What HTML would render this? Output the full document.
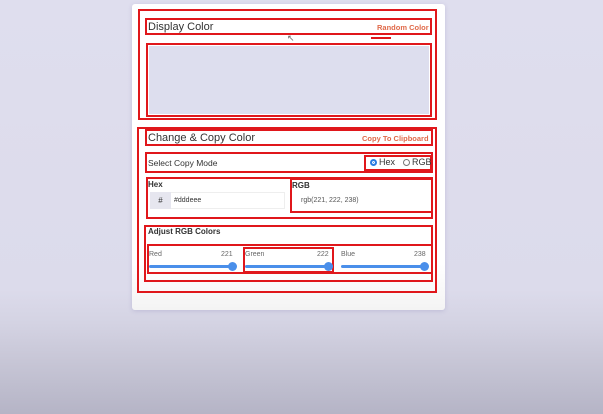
<!DOCTYPE html>
<html><head><style>
*{margin:0;padding:0;box-sizing:border-box}
body{width:603px;height:414px;overflow:hidden;background:linear-gradient(#dfdeee 0%,#dcdbeb 70%,#d4d3e3 78%,#c6c5d5 88%,#b5b4c6 100%);font-family:"Liberation Sans",sans-serif;position:relative;color:#333}
.a{position:absolute}
.r{position:absolute;border:2px solid #e0171b}
.card{left:132px;top:4px;width:313px;height:306px;background:linear-gradient(#fff 85%,#f4f4f4);border-radius:3px;box-shadow:0 1px 4px rgba(120,110,170,.25)}
.t{font-size:11px;color:#333}
.s{font-size:8px;color:#333}
.o{font-size:7.5px;color:#e06a4a;font-weight:bold}
.track{position:absolute;height:3px;background:#4a8fea;border-radius:2px}
.knob{position:absolute;width:9px;height:9px;border-radius:50%;background:#4a8fea}
</style></head><body>
<div class="a card"></div>
<div class="r" style="left:138px;top:9px;width:299px;height:111px"></div>
<div class="r" style="left:145px;top:18px;width:287px;height:17px"></div>
<div class="a t" style="left:148px;top:21px">Display Color</div>
<div class="a o" style="left:377px;top:23px">Random Color</div>
<div class="a" style="left:371px;top:37px;width:20px;height:2px;background:#e0171b"></div>
<div class="r" style="left:146px;top:43px;width:286px;height:74px;background:#dddeee;box-shadow:inset 0 0 0 1px #fff"></div>
<div class="a" style="left:287px;top:33px;font-size:9px;color:#666">↖</div>

<div class="r" style="left:137px;top:127px;width:300px;height:166px"></div>
<div class="r" style="left:145px;top:129px;width:288px;height:17px"></div>
<div class="a t" style="left:148px;top:132px">Change &amp; Copy Color</div>
<div class="a o" style="left:362px;top:134px">Copy To Clipboard</div>
<div class="r" style="left:145px;top:152px;width:288px;height:21px"></div>
<div class="a s" style="left:148px;top:158px;font-size:8.5px">Select Copy Mode</div>
<div class="r" style="left:364px;top:155px;width:68px;height:16px"></div>
<div class="a" style="left:370px;top:159px;width:7px;height:7px;border-radius:50%;border:2px solid #2a7de1;background:#2a7de1;box-shadow:inset 0 0 0 1px #fff"></div>
<div class="a" style="left:379px;top:157px;font-size:9px">Hex</div>
<div class="a" style="left:403px;top:159px;width:7px;height:7px;border-radius:50%;border:1px solid #777"></div>
<div class="a" style="left:412px;top:157px;font-size:9px">RGB</div>
<div class="r" style="left:146px;top:177px;width:287px;height:42px"></div>
<div class="a s" style="left:148px;top:180px;font-weight:bold">Hex</div>
<div class="a" style="left:150px;top:192px;width:135px;height:17px;border:1px solid #eee"></div>
<div class="a" style="left:150px;top:192px;width:21px;height:17px;background:#e6e6ef;font-size:8px;text-align:center;line-height:17px">#</div>
<div class="a" style="left:174px;top:197px;font-size:7px">#dddeee</div>
<div class="r" style="left:290px;top:178px;width:143px;height:35px"></div>
<div class="a s" style="left:292px;top:181px;font-weight:bold">RGB</div>
<div class="a" style="left:301px;top:197px;font-size:7px;color:#555">rgb(221, 222, 238)</div>

<div class="r" style="left:144px;top:225px;width:289px;height:57px"></div>
<div class="a s" style="left:148px;top:227px;font-weight:bold;color:#333">Adjust RGB Colors</div>
<div class="r" style="left:147px;top:244px;width:286px;height:30px"></div>
<div class="r" style="left:243px;top:247px;width:91px;height:26px"></div>
<div class="a s" style="left:149px;top:251px;font-size:7px;color:#666">Red</div>
<div class="a s" style="left:221px;top:251px;font-size:7px;color:#666">221</div>
<div class="track" style="left:149px;top:265px;width:84px"></div><div class="knob" style="left:228px;top:262px"></div>
<div class="a s" style="left:245px;top:251px;font-size:7px;color:#666">Green</div>
<div class="a s" style="left:317px;top:251px;font-size:7px;color:#666">222</div>
<div class="track" style="left:245px;top:265px;width:84px"></div><div class="knob" style="left:324px;top:262px"></div>
<div class="a s" style="left:341px;top:251px;font-size:7px;color:#666">Blue</div>
<div class="a s" style="left:414px;top:251px;font-size:7px;color:#666">238</div>
<div class="track" style="left:341px;top:265px;width:85px"></div><div class="knob" style="left:420px;top:262px"></div>
</body></html>
